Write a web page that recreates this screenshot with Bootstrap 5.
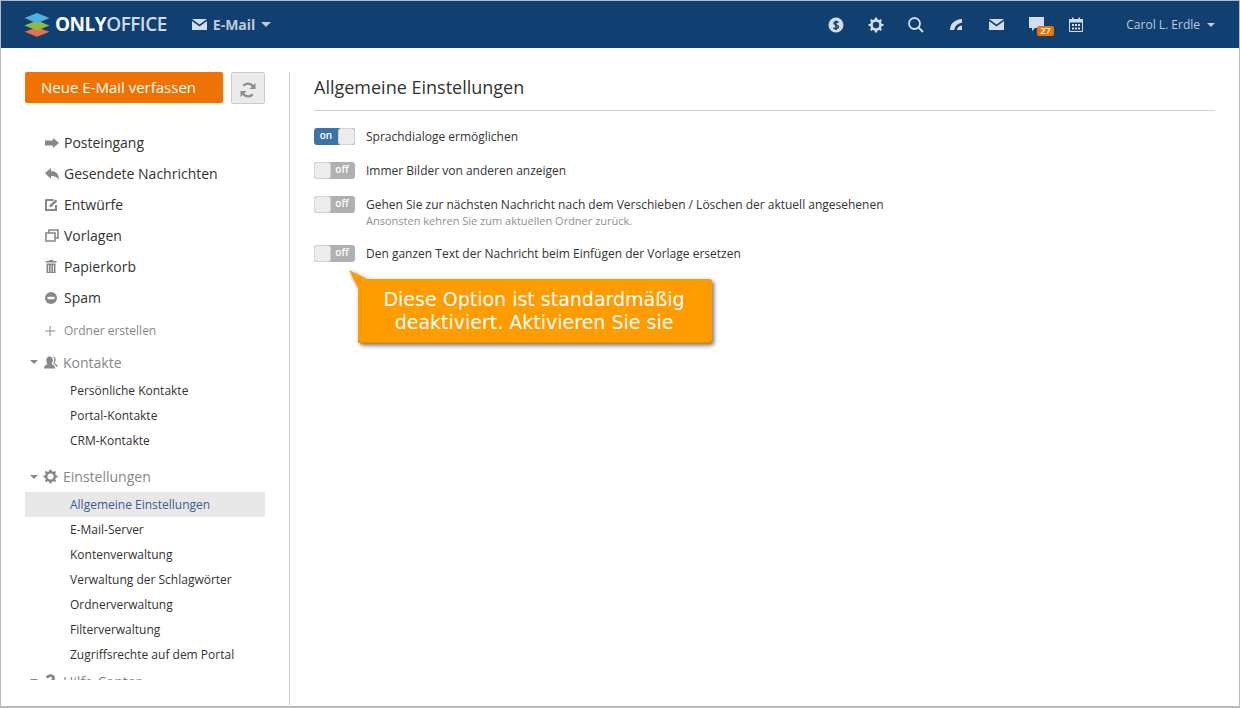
<!DOCTYPE html>
<html lang="de"><head><meta charset="utf-8"><title>ONLYOFFICE</title>
<link href="https://cdn.jsdelivr.net/npm/bootstrap@5.3.0/dist/css/bootstrap.min.css" rel="stylesheet">
<style>
html,body{height:100%;overflow:hidden}
body{font-family:"Open Sans","Liberation Sans",sans-serif;font-size:12px;color:#333;background:#fff}
.frame{height:708px;border:1px solid #b9b9b9;border-bottom-width:2px;position:relative;overflow:hidden}
.topbar{height:47px;background:#0f4071;color:#d3dde8}
.logo-mark{margin-left:23px;margin-top:-1px}
.logo-text{font-weight:700;font-size:19px;letter-spacing:-.5px;color:#fff;margin-left:5px;line-height:1}
.logo-text span{color:#cfdbe6;font-weight:600}
.module{margin-left:25px;font-size:14px;font-weight:700;color:#bfcad6;gap:6px;margin-top:-1px}
.caret-d{display:inline-block;border-left:5px solid transparent;border-right:5px solid transparent;border-top:5px solid currentColor}
.tools{margin-left:auto;margin-right:24px}
.tool{width:40px;display:flex;justify-content:center;position:relative}
.tool-badge{position:absolute;left:21px;top:9px;background:#ef7304;color:#fff;font-size:9px;font-weight:600;line-height:10px;border-radius:2px;padding:0 3px}
.user{margin-left:30px;font-size:12px;color:#bfcad6;gap:7px}
.user .caret-d{border-left-width:4px;border-right-width:4px;border-top-width:4px}
.side{width:264px;height:608px;margin-top:24px;padding-left:24px;overflow:hidden;flex:none}
.side-inner{width:240px}
.new-btn{width:198px;height:31px;background:#ef7304;border:0;border-radius:2px;color:#fff;font-size:15px;font-weight:400;line-height:31px;text-align:left;padding:0 0 0 16px}
.new-btn:hover{background:#ef7304;color:#fff}
.refresh{width:34px;height:32px;background:#ebebeb;border:1px solid #ccc;border-radius:2px;padding:0}
.folders{margin:23px 0 0;padding:0;list-style:none}
.folder{height:31px;font-size:14px;color:#333;padding-left:20px;gap:5px}
.folder svg{width:14px;flex:none}
.create{height:33px;font-size:12px;color:#83888d;padding:3px 0 0 20px;gap:9px}
.group-h{height:32px;font-size:14px;color:#83888d;padding-left:5px;gap:5px}
.group-e{height:31px}
.group-l{height:28px}
.group-h .caret-d{border-left-width:4px;border-right-width:4px;border-top-width:4px}
.subs{list-style:none;margin:0 0 8px;padding:0}
.subs-l{margin-bottom:0}
.sub{height:25px;padding:1px 0 0 45px;font-size:12px;color:#333}
.sub.on{background:#e8e8e8;color:#3d5a92}
.main{flex:1;margin:24px 24px 0;border-left:1px solid #ccc;height:633px;padding-left:24px}
.page-h{font-size:18px;line-height:30px;height:39px;border-bottom:1px solid #d1d1d1;color:#333;margin-bottom:17px}
.opt{gap:11px;margin-bottom:17px;align-items:flex-start}
.opt-t{line-height:17px;font-size:12px;color:#333}
.opt-n{font-size:11px;line-height:15px;color:#919191}
.sw{width:41px;height:17px;border-radius:3px;flex:none;overflow:hidden;font-size:10px;font-weight:600;color:#fff;line-height:15px;text-align:center}
.sw .lab{flex:1}
.sw-off .lab{padding-right:2px}
.sw .knob{width:17px;background:#ececec;border:1px solid #d4d4d4;border-radius:3px}
.sw-on{background:#3b72a8}
.sw-off{background:#b0b0b0}
.tip{position:absolute;left:348px;top:269px;width:370px;height:80px;color:#fff}
.tip svg{position:absolute;left:0;top:0;filter:drop-shadow(2px 2px 2px rgba(0,0,0,.55))}
.tip-text{position:absolute;left:8px;top:11px;width:354px;height:63px;font-family:"DejaVu Sans",sans-serif;font-size:19px;line-height:23px;text-align:center;padding-top:7px}
</style></head><body>
<div class="frame">
<nav class="topbar d-flex align-items-center">
 <svg class="logo-mark" width="26" height="25" viewBox="0 0 26 25"><path d="M13 15.500l12.500 4.200-12.500 5-12.500-5z" fill="#e8714d"/><path d="M13 8.500l12.500 5-12.500 5-12.500-5z" fill="#8ebb3c"/><path d="M13 1l12.500 5-12.500 5.200L.5 6z" fill="#4fb3e2"/></svg>
 <span class="logo-text">ONLY<span>OFFICE</span></span>
 <span class="module d-flex align-items-center">
  <svg width="15" height="11" viewBox="0 0 15 11"><path d="M0 0h15L7.500 5.500zM0 2l7.500 5.500L15 2v9H0z" fill="#d3dde8"/></svg>E-Mail <i class="caret-d"></i></span>
 <div class="tools d-flex align-items-center">
  <span class="tool"><svg width="16" height="16" viewBox="0 0 16 16"><circle cx="8" cy="8" r="7.500" fill="#d3dde8"/><path d="M10.500 5.500C9.500 4.500 6 4.500 6 6.300S10.500 8 10.500 9.800 7 12 5.500 10.800M8 3.500v9.500" fill="none" stroke="#0f4071" stroke-width="1.500"/></svg></span>
  <span class="tool"><svg width="16" height="16" viewBox="0 0 16 16"><circle cx="8" cy="8" r="4.600" fill="none" stroke="#d3dde8" stroke-width="2.600"/><path d="M8 .5v15M.5 8h15M2.700 2.700l10.600 10.600M13.300 2.700L2.700 13.300" stroke="#d3dde8" stroke-width="2.200"/><circle cx="8" cy="8" r="3.200" fill="#0f4071"/></svg></span>
  <span class="tool"><svg width="16" height="16" viewBox="0 0 16 16"><circle cx="6.500" cy="6.500" r="5.500" fill="none" stroke="#d3dde8" stroke-width="1.800"/><path d="M10.500 10.500L15 15" stroke="#d3dde8" stroke-width="2"/></svg></span>
  <span class="tool"><svg width="12" height="11" viewBox="0 0 12 11"><path d="M0 11C0 4.500 5 .5 12 0v3.800C8 4.300 4.800 7 4.300 11z" fill="#d3dde8"/><path d="M7 11C7 8.800 9 7 12 6.500V11z" fill="#d3dde8"/></svg></span>
  <span class="tool"><svg width="15" height="11" viewBox="0 0 15 11"><path d="M0 0h15L7.500 5.500zM0 2l7.500 5.500L15 2v9H0z" fill="#d3dde8"/></svg></span>
  <span class="tool"><svg width="15" height="15" viewBox="0 0 15 15"><path d="M0 0h15v11H6L3 14v-3H0z" fill="#d3dde8"/></svg><b class="tool-badge">27</b></span>
  <span class="tool"><svg width="14" height="15" viewBox="0 0 14 15"><path d="M.5 2.500h13v12H.5zM0 4.500h14" fill="none" stroke="#d3dde8"/><path d="M0 2h14v3.500H0zM3 .5h1.500V3H3zM9.500.5H11V3H9.500zM3 7h2v2H3zM6 7h2v2H6zM9 7h2v2H9zM3 10.500h2v2H3zM6 10.500h2v2H6zM9 10.500h2v2H9z" fill="#d3dde8"/></svg></span>
  <span class="user d-flex align-items-center">Carol L. Erdle <i class="caret-d"></i></span>
 </div>
</nav>
<div class="d-flex">
 <aside class="side"><div class="side-inner">
  <div class="d-flex gap-2 align-items-start">
   <button class="btn new-btn">Neue E-Mail verfassen</button>
   <button class="btn refresh"><svg width="16" height="16" viewBox="0 0 16 16"><path d="M14 6.500A6.200 6.200 0 0 0 3.300 3.800M2 9.500a6.200 6.200 0 0 0 10.700 2.700" fill="none" stroke="#8e8e8e" stroke-width="2.300"/><path d="M15.500 1V7H9.500zM.5 15V9h6z" fill="#8e8e8e"/></svg></button>
  </div>
  <ul class="folders">
   <li class="folder d-flex align-items-center"><svg height="10" viewBox="0 0 14 10"><path d="M0 2.500h8V0l6 5-6 5V7.500H0z" fill="#83888d"/></svg>Posteingang</li>
   <li class="folder d-flex align-items-center"><svg height="12" viewBox="0 0 14 12"><path d="M0 5l6-5v3c5 0 8 3 8 9-2-3-4-4-8-4v3z" fill="#83888d"/></svg>Gesendete Nachrichten</li>
   <li class="folder d-flex align-items-center"><svg height="12" viewBox="0 0 14 12"><path d="M1 1h7.500M1 .2v10.800h10V6" fill="none" stroke="#83888d" stroke-width="2"/><path d="M4.500 8V6.300L10.500.5 12.300 2.300 6.300 8z" fill="#83888d"/></svg>Entwürfe</li>
   <li class="folder d-flex align-items-center"><svg height="13" viewBox="0 0 14 13"><path d="M1 4h9v8H1zM4 3.500V1h9v8h-2.500" fill="none" stroke="#83888d" stroke-width="1.600"/></svg>Vorlagen</li>
   <li class="folder d-flex align-items-center"><svg height="13" viewBox="0 0 14 13"><path d="M4 0h4v1H4zM.5 1h11v1.500H.5zM1.500 3.500h9V13h-9z" fill="#83888d"/><path d="M3.500 5v7M6 5v7M8.500 5v7" stroke="#fff" stroke-width=".8"/></svg>Papierkorb</li>
   <li class="folder d-flex align-items-center"><svg height="12" viewBox="0 0 14 12"><circle cx="6" cy="6" r="6" fill="#83888d"/><path d="M2.500 4.800h7v2.400h-7z" fill="#fff"/></svg>Spam</li>
  </ul>
  <div class="create d-flex align-items-center"><svg width="10" height="10" viewBox="0 0 10 10"><path d="M5 0v10M0 5h10" stroke="#83888d"/></svg><span>Ordner erstellen</span></div>
  <div class="group-h d-flex align-items-center"><i class="caret-d"></i><svg width="15" height="13" viewBox="0 0 16 13"><path d="M1 13c0-3 1.500-4 4-5-1-1-1.500-2-1.500-4C3.500 1.500 5 0 7 0s3.500 1.500 3.500 4c0 2-.5 3-1.500 4 2.500 1 4 2 4 5z" fill="#83888d"/><path d="M10.500 0c2 0 3 1.500 3 3.500 0 1.500-.5 2.500-1.500 3.500 2 .8 3.500 2 3.500 4H14c-.5-2-2.500-3-3-3.500 .8-1 1-2.500 1-4 0-1.500-.5-2.500-1.500-3.500z" fill="#83888d"/></svg>Kontakte</div>
  <ul class="subs">
   <li class="sub d-flex align-items-center">Persönliche Kontakte</li>
   <li class="sub d-flex align-items-center">Portal-Kontakte</li>
   <li class="sub d-flex align-items-center">CRM-Kontakte</li>
  </ul>
  <div class="group-h group-e d-flex align-items-center"><i class="caret-d"></i><svg width="15" height="15" viewBox="0 0 16 16"><circle cx="8" cy="8" r="4.600" fill="none" stroke="#83888d" stroke-width="2.600"/><path d="M8 .5v15M.5 8h15M2.700 2.700l10.600 10.600M13.300 2.700L2.700 13.300" stroke="#83888d" stroke-width="2.200"/><circle cx="8" cy="8" r="3.200" fill="#fff"/></svg>Einstellungen</div>
  <ul class="subs subs-l">
   <li class="sub on d-flex align-items-center">Allgemeine Einstellungen</li>
   <li class="sub d-flex align-items-center">E-Mail-Server</li>
   <li class="sub d-flex align-items-center">Kontenverwaltung</li>
   <li class="sub d-flex align-items-center">Verwaltung der Schlagwörter</li>
   <li class="sub d-flex align-items-center">Ordnerverwaltung</li>
   <li class="sub d-flex align-items-center">Filterverwaltung</li>
   <li class="sub d-flex align-items-center">Zugriffsrechte auf dem Portal</li>
  </ul>
  <div class="group-h group-l d-flex align-items-center"><i class="caret-d"></i><svg width="15" height="15" viewBox="0 0 15 15"><path d="M3 4c0-5 9-5 9 0 0 3-3 3-3 6H6c0-4 3-3.500 3-6 0-1.500-3-1.500-3 0zM6 11h3v3H6z" fill="#83888d"/></svg>Hilfe-Center</div>
 </div></aside>
 <main class="main">
  <div class="page-h">Allgemeine Einstellungen</div>
  <div class="opt d-flex"><div class="sw sw-on d-flex"><span class="lab">on</span><span class="knob"></span></div><div class="opt-t">Sprachdialoge ermöglichen</div></div>
  <div class="opt d-flex"><div class="sw sw-off d-flex"><span class="knob"></span><span class="lab">off</span></div><div class="opt-t">Immer Bilder von anderen anzeigen</div></div>
  <div class="opt d-flex"><div class="sw sw-off d-flex"><span class="knob"></span><span class="lab">off</span></div><div><div class="opt-t">Gehen Sie zur nächsten Nachricht nach dem Verschieben / Löschen der aktuell angesehenen</div><div class="opt-n">Ansonsten kehren Sie zum aktuellen Ordner zurück.</div></div></div>
  <div class="opt d-flex"><div class="sw sw-off d-flex"><span class="knob"></span><span class="lab">off</span></div><div class="opt-t">Den ganzen Text der Nachricht beim Einfügen der Vorlage ersetzen</div></div>
 </main>
</div>
<div class="tip">
 <svg width="370" height="80" viewBox="0 0 370 80"><path d="M0 0L18 9H360a3 3 0 0 1 3 3v58a3 3 0 0 1-3 3H12a3 3 0 0 1-3-3V18z" fill="#ff9c00"/><path d="M9 70a3 3 0 0 0 3 3H360a3 3 0 0 0 3-3" fill="none" stroke="#d98400"/></svg>
 <div class="tip-text">Diese Option ist standardmäßig<br>deaktiviert. Aktivieren Sie sie</div>
</div>
</div>
</body></html>
